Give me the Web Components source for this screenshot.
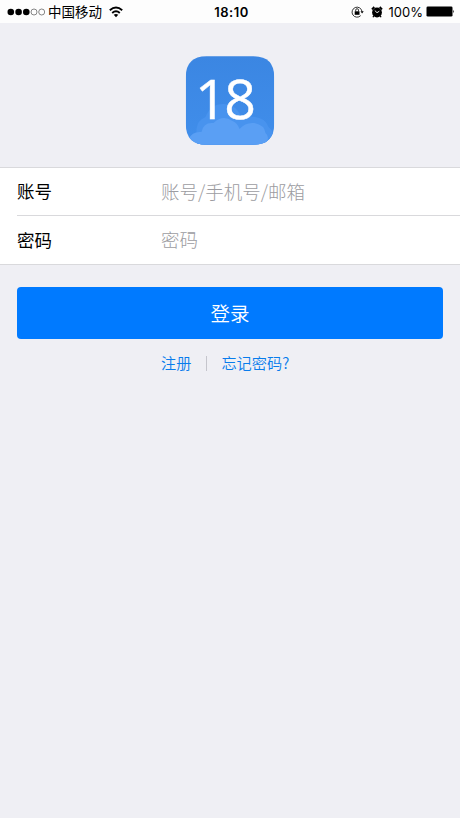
<!DOCTYPE html>
<html lang="zh-CN">
<head>
<meta charset="utf-8">
<title>登录</title>
<style>
html,body{margin:0;height:100%}
body{background:#efeff4;font-family:Inter,"Noto Sans CJK SC",sans-serif}
</style>
</head>
<body>
<login-screen></login-screen>
<script>
const define = (name, html) => customElements.define(name, class extends HTMLElement {
  constructor() {
    super();
    const t = document.createElement('template');
    t.innerHTML = html;
    this.attachShadow({mode: 'open'}).append(t.content.cloneNode(true));
  }
});

define('status-bar', `
<style>
:host{display:grid;grid-template-columns:1fr auto 1fr;align-items:center;height:23px;background:#fdfdfd;color:#000;padding:0 5px 0 7px;box-sizing:border-box;font-size:13px;line-height:23px}
div{display:flex;align-items:center;height:23px}
svg{display:block;flex:none}
.carrier{font:400 13.5px/23px "Noto Sans CJK SC",sans-serif;margin:0 7px 0 3px}
.time{font-weight:600;font-size:13px;letter-spacing:.5px;padding:1px 0 0 1px;box-sizing:border-box}
.right{justify-content:flex-end}
.pct{font-size:13px;margin:1px 3px 0 6px}
</style>
<div>
<svg width="38" height="8" viewBox="0 0 38 8"><circle cx="3.8" cy="4" r="3.3"/><circle cx="11.6" cy="4" r="3.3"/><circle cx="19.3" cy="4" r="3.3"/><g fill="none" stroke="#555" stroke-width=".7"><circle cx="27" cy="4" r="3"/><circle cx="34.7" cy="4" r="3"/></g></svg>
<span class="carrier">中国移动</span>
<svg width="14" height="12" viewBox="0 0 14 12"><g fill="none" stroke="#000" stroke-width="1.9"><path d="M.8 4.2Q7-1.2 13.2 4.2"/><path d="M3.2 7Q7 3.7 10.8 7"/></g><path d="M4.7 8.8Q7 7 9.3 8.8L7 11.2Z"/></svg>
</div>
<div class="time">18:10</div>
<div class="right">
<svg width="13" height="12" viewBox="0 0 13 12"><path d="M9.7 9.6A5 5 0 1 1 11 5.4" fill="none" stroke="#000" stroke-width=".8"/><path d="M9.5 5.3h3.2l-1.6 2.2z"/><rect x="3.7" y="5.3" width="4.8" height="3.5"/><path d="M4.7 5.5V4.1a1.4 1.4 0 0 1 2.8 0v1.4" fill="none" stroke="#000" stroke-width=".8"/></svg>
<svg width="12" height="12" viewBox="0 0 12 12" style="margin-left:7px"><circle cx="6" cy="6.5" r="4.9"/><path d="M.9 3.3 3.3 1M11.1 3.3 8.7 1" stroke="#000" stroke-width="1.8"/><path d="m2.8 9.8-.8 1.5M9.2 9.8l.8 1.5" stroke="#000" stroke-width="1.3"/><path d="M3.8 4.5 6 6.7l2.3-1.5" fill="none" stroke="#fff" stroke-width=".9"/></svg>
<span class="pct">100%</span>
<svg width="29" height="11" viewBox="0 0 29 11"><rect x=".5" y=".5" width="26" height="10" rx="1.3"/><path d="M27.3 3.8q1.6 1.7 0 3.4z"/></svg>
</div>`);

define('app-logo', `
<style>:host{display:block;width:90px;height:89px}svg{display:block}</style>
<svg width="90" height="89" viewBox="-.5 0 90 89">
<defs><linearGradient id="g" x2="0" y2="1"><stop stop-color="#3b86e2"/><stop offset="1" stop-color="#408eeb"/></linearGradient><clipPath id="c"><path d="M21 .3H68Q88.7.3 88.7 21V68Q88.7 88.7 68 88.7H21Q.3 88.7.3 68V21Q.3.3 21 .3Z"/></clipPath></defs>
<g clip-path="url(#c)"><rect width="89" height="89" fill="url(#g)"/>
<path d="M11 89V73Q12 64 20 61Q25 48 38 48Q50 48 56 61Q79 58 83 71Q89 75 89 89Z" fill="#4893ee"/>
<path d="M3 83Q7 75 16 76Q18 66 28 67Q37 58 47 65Q52 67 54 73Q60 66 69 67Q79 69 80 77Q85 81 80 89H3Z" fill="#5a9ff4"/></g>
<text y="63.3" fill="#fff" stroke="#fff" stroke-width=".4" font-family="Open Sans,sans-serif" font-size="55.5"><tspan x="9.6">1</tspan><tspan x="38.8">8</tspan></text>
</svg>`);

define('form-row', `
<style>
:host{display:flex;align-items:center;height:48px;margin-left:17px;padding-bottom:2px;box-sizing:border-box;font-family:"Noto Sans CJK SC",sans-serif}
.label{width:144px;font-size:17.5px;color:#000}
.hint{font-size:18.5px;font-weight:300;color:#9c9ca1}
</style>
<span class="label"><slot name="label"></slot></span><span class="hint"><slot></slot></span>`);

define('form-group', `
<style>
:host{display:block;background:#fff;border:solid #d9d9dc;border-width:1px 0;height:98px;box-sizing:border-box}
::slotted(form-row:first-child){border-bottom:1px solid #d9d9dc}
</style><slot></slot>`);

define('primary-button', `
<style>
:host{display:block}
button{display:block;width:100%;height:52px;border:0;border-radius:4px;background:#007aff;color:#fff;padding:0;font:350 19.5px/52px "Noto Sans CJK SC",sans-serif}
</style><button><slot></slot></button>`);

define('link-bar', `
<style>
:host{display:flex;align-items:center;height:24px;font:350 15.2px/24px "Noto Sans CJK SC",sans-serif;color:#087cec}
i{width:1px;height:15px;background:#c5c5cc;margin:2px 14px 0 15px}
</style><slot name="first"></slot><i></i><slot name="second"></slot>`);

define('login-screen', `
<style>
:host{display:flex;flex-direction:column;min-height:100vh;background:#efeff4}
app-logo{align-self:center;margin:33px 0 22px}
primary-button{margin:22px 17px 0}
link-bar{margin:11px 0 0 161px}
</style>
<status-bar></status-bar>
<app-logo></app-logo>
<form-group>
<form-row><span slot="label">账号</span>账号/手机号/邮箱</form-row>
<form-row><span slot="label">密码</span>密码</form-row>
</form-group>
<primary-button>登录</primary-button>
<link-bar><span slot="first">注册</span><span slot="second">忘记密码?</span></link-bar>`);
</script>
</body>
</html>
